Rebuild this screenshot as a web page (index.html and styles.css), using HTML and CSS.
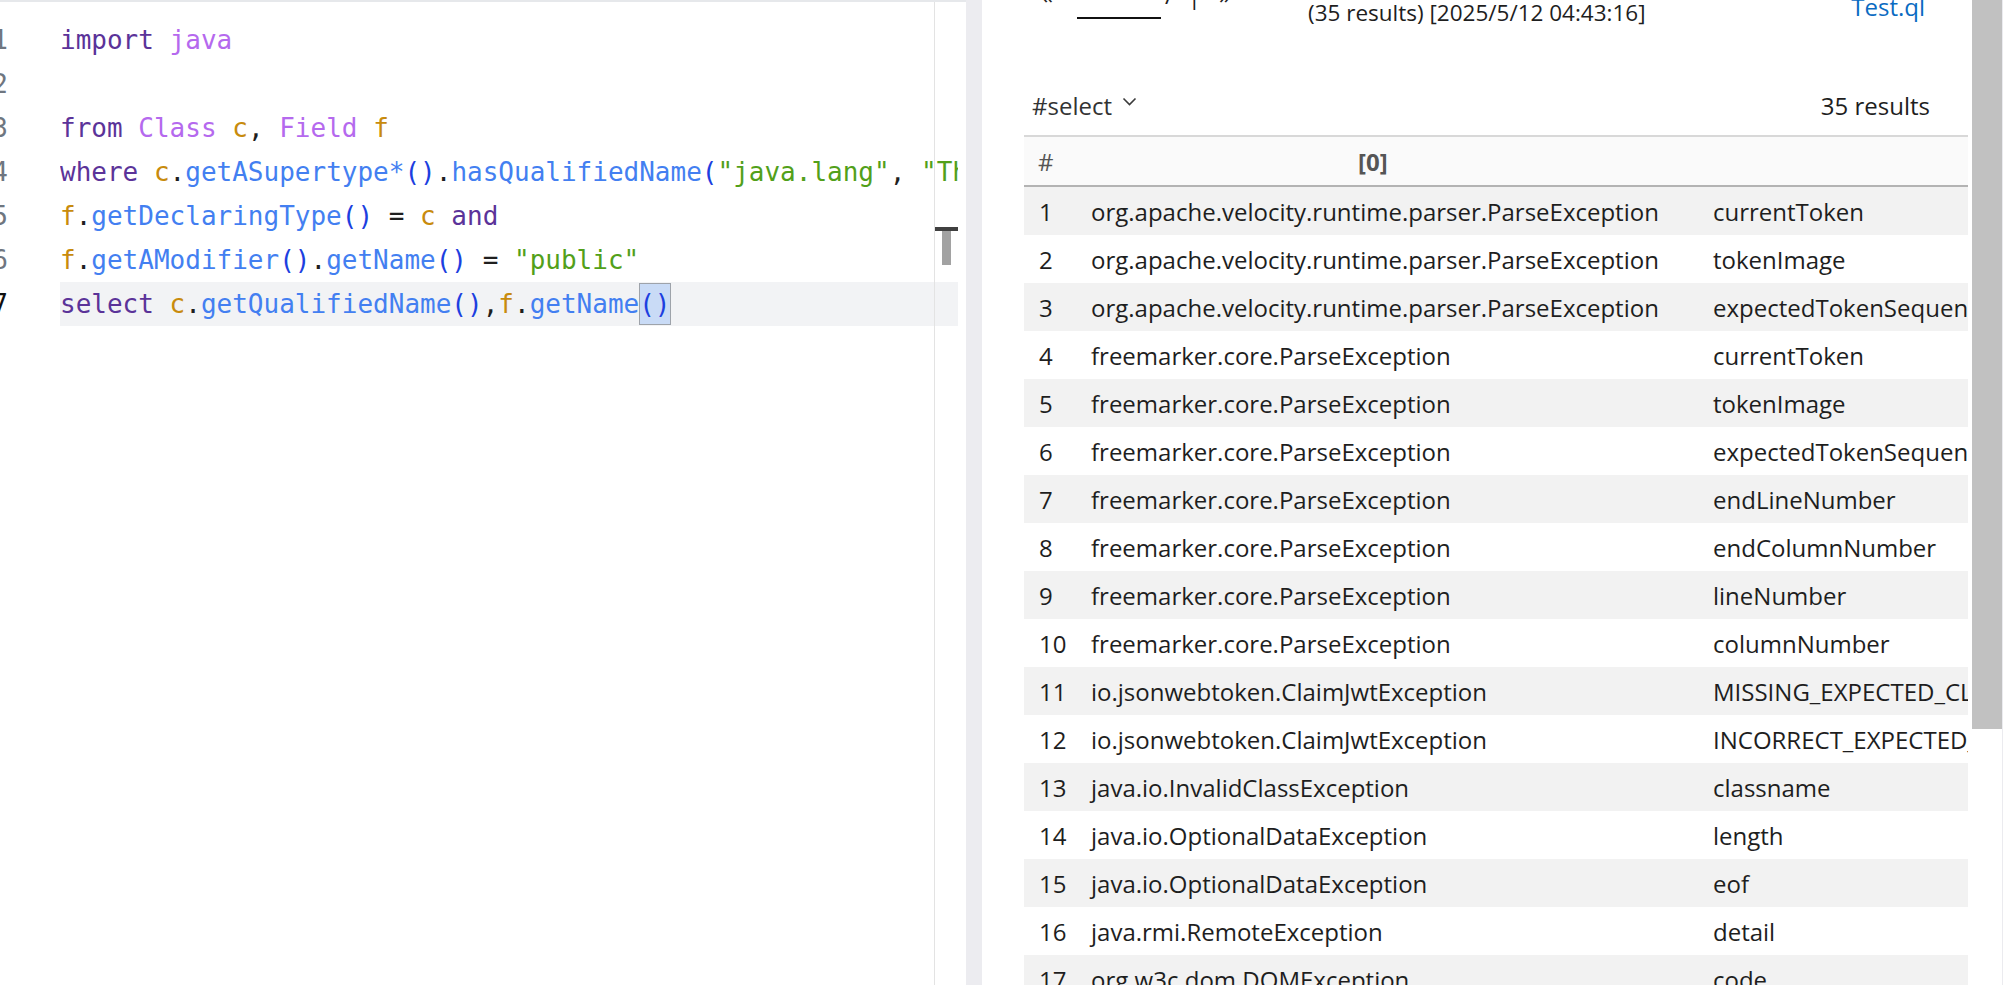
FILE: index.html
```
<!DOCTYPE html>
<html>
<head>
<meta charset="utf-8">
<link rel="stylesheet" href="styles.css">
</head>
<body>
<div class="app">
  <div class="editor">
    <div class="topstrip"></div>
    <div class="code">
      <div class="line"><span class="ln">1</span><span class="txt"><span class="kw">import</span> <span class="ty">java</span></span></div>
      <div class="line"><span class="ln">2</span><span class="txt"></span></div>
      <div class="line"><span class="ln">3</span><span class="txt"><span class="kw">from</span> <span class="ty">Class</span> <span class="va">c</span>, <span class="ty">Field</span> <span class="va">f</span></span></div>
      <div class="line"><span class="ln">4</span><span class="txt"><span class="kw">where</span> <span class="va">c</span>.<span class="me">getASupertype*</span><span class="pa">()</span>.<span class="me">hasQualifiedName</span><span class="pa">(</span><span class="st">"java.lang"</span>, <span class="st">"Throwable"</span><span class="pa">)</span> <span class="kw">and</span></span></div>
      <div class="line"><span class="ln">5</span><span class="txt"><span class="va">f</span>.<span class="me">getDeclaringType</span><span class="pa">()</span> = <span class="va">c</span> <span class="kw">and</span></span></div>
      <div class="line"><span class="ln">6</span><span class="txt"><span class="va">f</span>.<span class="me">getAModifier</span><span class="pa">()</span>.<span class="me">getName</span><span class="pa">()</span> = <span class="st">"public"</span></span></div>
      <div class="line current"><span class="ln">7</span><span class="txt"><span class="kw">select</span> <span class="va">c</span>.<span class="me">getQualifiedName</span><span class="pa">()</span>,<span class="va">f</span>.<span class="me">getName</span><span class="pa match">()</span></span></div>
    </div>
    <div class="guide"></div>
    <div class="ibeam"><span class="ibeam-top"></span><span class="ibeam-stem"></span></div>
  </div>
  <div class="splitter"></div>
  <div class="results">
    <div class="results-head">
      <div class="nav">
        <span class="navch">«</span>
        <span class="navlink"></span>
        <span class="navch slash">/</span>
        <span class="navch bar">|</span>
        <span class="navch close">»</span>
      </div>
      <div class="summary">(35 results) [2025/5/12 04:43:16]</div>
      <a class="file">Test.ql</a>
    </div>
    <div class="toolbar">
      <div class="select">#select
        <svg class="chev" width="15" height="10" viewBox="0 0 15 10"><path d="M1.5 1.5 L7.5 7.5 L13.5 1.5" fill="none" stroke="#3b3b3b" stroke-width="1.6"/></svg>
      </div>
      <div class="count">35 results</div>
    </div>
    <table class="grid">
      <colgroup><col class="c-num"><col class="c-a"><col class="c-b"></colgroup>
      <thead>
        <tr><th class="h-num">#</th><th class="h-a">[0]</th><th class="h-b"></th></tr>
      </thead>
      <tbody>
        <tr><td>1</td><td>org.apache.velocity.runtime.parser.ParseException</td><td>currentToken</td></tr>
        <tr><td>2</td><td>org.apache.velocity.runtime.parser.ParseException</td><td>tokenImage</td></tr>
        <tr><td>3</td><td>org.apache.velocity.runtime.parser.ParseException</td><td>expectedTokenSequences</td></tr>
        <tr><td>4</td><td>freemarker.core.ParseException</td><td>currentToken</td></tr>
        <tr><td>5</td><td>freemarker.core.ParseException</td><td>tokenImage</td></tr>
        <tr><td>6</td><td>freemarker.core.ParseException</td><td>expectedTokenSequences</td></tr>
        <tr><td>7</td><td>freemarker.core.ParseException</td><td>endLineNumber</td></tr>
        <tr><td>8</td><td>freemarker.core.ParseException</td><td>endColumnNumber</td></tr>
        <tr><td>9</td><td>freemarker.core.ParseException</td><td>lineNumber</td></tr>
        <tr><td>10</td><td>freemarker.core.ParseException</td><td>columnNumber</td></tr>
        <tr><td>11</td><td>io.jsonwebtoken.ClaimJwtException</td><td>MISSING_EXPECTED_CLAIM_MESSAGE_TEMPLATE</td></tr>
        <tr><td>12</td><td>io.jsonwebtoken.ClaimJwtException</td><td>INCORRECT_EXPECTED_CLAIM_MESSAGE_TEMPLATE</td></tr>
        <tr><td>13</td><td>java.io.InvalidClassException</td><td>classname</td></tr>
        <tr><td>14</td><td>java.io.OptionalDataException</td><td>length</td></tr>
        <tr><td>15</td><td>java.io.OptionalDataException</td><td>eof</td></tr>
        <tr><td>16</td><td>java.rmi.RemoteException</td><td>detail</td></tr>
        <tr><td>17</td><td>org.w3c.dom.DOMException</td><td>code</td></tr>
        <tr><td>18</td><td>org.w3c.dom.DOMException</td><td>INDEX_SIZE_ERR</td></tr>
      </tbody>
    </table>
  </div>
  <div class="scrollbar"><div class="thumb"></div></div>
  <div class="edge"></div>
</div>
</body>
</html>
```
FILE: styles.css
```
html, body {
  margin: 0;
  padding: 0;
  background: #ffffff;
  overflow: hidden;
}
.app {
  display: flex;
  width: 2003px;
  height: 985px;
  overflow: hidden;
}
.editor {
  position: relative;
  width: 966px;
  flex: none;
  background: #ffffff;
  overflow: hidden;
}
.topstrip {
  height: 2px;
  background: #e6e8eb;
}
.code {
  padding-top: 16px;
  font-family: "DejaVu Sans Mono", "Liberation Mono", monospace;
  font-size: 26px;
  color: #1f1f1f;
}
.line {
  display: flex;
  height: 44px;
  line-height: 44px;
}
.ln {
  width: 8px;
  flex: none;
  display: flex;
  justify-content: flex-end;
  overflow: hidden;
  color: #6f7680;
}
.current .ln { color: #0f0f0f; }
.txt {
  display: block;
  margin-left: 52px;
  width: 898px;
  flex: none;
  white-space: pre;
  overflow: hidden;
}
.current .txt { background: #f2f3f5; }
.kw { color: #5b3399; }
.ty { color: #b569ee; }
.va { color: #c88b0d; }
.me { color: #437ff1; }
.pa { color: #1d3fe0; }
.st { color: #52a01a; }
.match {
  display: inline-block;
  background: #c9dbf6;
  outline: 1px solid #9ea3aa;
  outline-offset: -1px;
  line-height: 42px;
  vertical-align: top;
  margin-top: 1px;
}
.guide {
  position: absolute;
  left: 934px;
  top: 2px;
  bottom: 0;
  width: 1px;
  background: #e3e3e3;
}
.ibeam {
  position: absolute;
  left: 935px;
  top: 227px;
  width: 23px;
  height: 38px;
}
.ibeam-top {
  position: absolute;
  left: 0;
  top: 0;
  width: 23px;
  height: 4px;
  background: #404040;
}
.ibeam-stem {
  position: absolute;
  left: 7px;
  top: 4px;
  width: 9px;
  height: 34px;
  background: #a2a2a2;
}
.splitter {
  width: 16px;
  flex: none;
  background: #ececf0;
}
.results {
  width: 946px;
  flex: none;
  padding: 0 2px 0 42px;
  font-family: "Open Sans", "Noto Sans", sans-serif;
  font-size: 24px;
  color: #1e1e1e;
  overflow: hidden;
}
.results-head {
  height: 30px;
  display: flex;
  align-items: flex-start;
}
.nav {
  width: 284px;
  flex: none;
  display: flex;
  align-items: flex-start;
  padding-left: 17px;
  box-sizing: border-box;
}
.navch {
  display: block;
  line-height: 24px;
  margin-top: -17px;
  color: #1e1e1e;
}
.navlink {
  display: block;
  width: 84px;
  height: 17px;
  border-bottom: 2px solid #111;
  margin-left: 24px;
}
.slash { margin-left: 4px; }
.bar { margin-left: 14px; }
.close { margin-left: 18px; }
.summary {
  flex: 1;
  font-size: 22.5px;
  line-height: 26px;
}
.file {
  margin-right: 45px;
  color: #0a6bc2;
  line-height: 22px;
  margin-top: -4px;
}
.toolbar {
  margin-top: 50px;
  height: 50px;
  display: flex;
  align-items: center;
  justify-content: space-between;
  padding: 0 40px 0 8px;
  color: #333333;
}
.select {
  display: flex;
  align-items: center;
  gap: 10px;
}
.chev { margin-top: -6px; }
.count { color: #1e1e1e; }
.grid {
  margin-top: 5px;
  width: 944px;
  table-layout: fixed;
  border-collapse: collapse;
}
.c-num { width: 52px; }
.c-a { width: 622px; }
.c-b { width: 270px; }
.grid th {
  height: 48px;
  padding: 0;
  background: #fafafa;
  border-top: 2px solid #d8d8d8;
  border-bottom: 2px solid #b3b3b3;
  color: #555555;
  text-align: left;
  font-weight: 700;
  white-space: nowrap;
}
.grid th.h-num {
  padding-left: 14px;
  font-weight: 400;
}
.grid th.h-a {
  padding-left: 282px;
}
.grid td {
  height: 48px;
  padding: 0 0 0 15px;
  white-space: nowrap;
  overflow: hidden;
}
.grid tbody tr:nth-child(odd) td { background: #f2f2f2; }
.scrollbar {
  width: 30px;
  flex: none;
  background: #ffffff;
}
.thumb {
  height: 729px;
  background: #c1c1c1;
}
.edge {
  width: 3px;
  flex: none;
  background: #ebebef;
}
```
